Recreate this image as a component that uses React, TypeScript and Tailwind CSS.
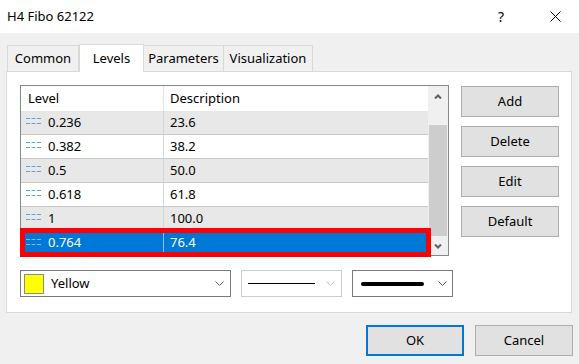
import type { ReactElement } from "react";

type Level = { value: string; description: string };

const levels: Level[] = [
  { value: "0.236", description: "23.6" },
  { value: "0.382", description: "38.2" },
  { value: "0.5", description: "50.0" },
  { value: "0.618", description: "61.8" },
  { value: "1", description: "100.0" },
  { value: "0.764", description: "76.4" },
];

function DashIcon({ selected }: { selected: boolean }): ReactElement {
  const fill = selected ? "#8fb8e6" : "#6a9fd4";
  return (
    <svg width="15" height="6" viewBox="0 0 15 6" className="-mt-[3px] shrink-0">
      {[0, 5.5, 11].map((x) => (
        <g key={x}>
          <rect x={x} y="0" width="4" height="1" fill={fill} />
          <rect x={x} y="5" width="4" height="1" fill={fill} />
        </g>
      ))}
    </svg>
  );
}

function Chevron({ color = "#606060" }: { color?: string }): ReactElement {
  return (
    <svg width="9" height="5" viewBox="0 0 9 5" className="shrink-0">
      <path d="M0.5 0.5 L4.5 4.5 L8.5 0.5" fill="none" stroke={color} strokeWidth="1" />
    </svg>
  );
}

function ScrollArrow({ up }: { up: boolean }): ReactElement {
  return (
    <svg width="8" height="5" viewBox="0 0 8 5">
      <path
        d={up ? "M1 4.5 L4 1.5 L7 4.5" : "M1 0.5 L4 3.5 L7 0.5"}
        fill="none"
        stroke="#606060"
        strokeWidth="2"
      />
    </svg>
  );
}

function SideButton({ label }: { label: string }): ReactElement {
  return (
    <button
      type="button"
      className="flex h-[31px] w-[98px] items-center justify-center border border-[#adadad] bg-[#e1e1e1]"
    >
      {label}
    </button>
  );
}

function Tab({ label, width, active = false }: { label: string; width: string; active?: boolean }): ReactElement {
  return active ? (
    <div
      className={`relative z-10 -mb-px flex h-[28px] items-start justify-center border border-b-0 border-[#d9d9d9] bg-white pt-[4px] ${width}`}
    >
      {label}
    </div>
  ) : (
    <div
      className={`-ml-px flex h-[26px] items-center justify-center border border-b-0 border-[#d9d9d9] bg-[#f0f0f0] first:ml-0 ${width}`}
    >
      {label}
    </div>
  );
}

export default function App(): ReactElement {
  return (
    <div className="flex h-[364px] w-[579px] flex-col overflow-hidden bg-[#f0f0f0] font-['Noto_Sans',sans-serif] text-[13px] text-black">
      {/* title bar */}
      <div className="flex h-[33px] shrink-0 items-center bg-white pl-[7px]">
        <span>H4 Fibo 62122</span>
        <div className="ml-auto flex items-center pr-[1px]">
          <span className="w-[46px] text-center text-[14px]">?</span>
          <span className="ml-[8px] flex w-[46px] justify-center">
            <svg width="11" height="11" viewBox="0 0 11 11">
              <path d="M0.5 0.5 L10.5 10.5 M10.5 0.5 L0.5 10.5" stroke="#000" strokeWidth="1" />
            </svg>
          </span>
        </div>
      </div>

      {/* tabs */}
      <div className="mt-[11px] flex h-[27px] items-end pl-[7px]">
        <Tab label="Common" width="w-[72px]" />
        <Tab label="Levels" width="w-[65px]" active />
        <Tab label="Parameters" width="w-[81px]" />
        <Tab label="Visualization" width="w-[90px]" />
      </div>

      {/* panel */}
      <div className="ml-[6px] flex h-[242px] w-[566px] flex-col border border-[#d9d9d9] bg-white pl-[13px] pt-[13px]">
        <div className="flex items-start">
          <div className="relative flex h-[171px] w-[429px] border border-[#828790] bg-white">
            <div className="flex flex-1 flex-col">
              <div className="flex h-[25px] shrink-0 items-center bg-white">
                <div className="w-[142px] pl-[7px]">Level</div>
                <div className="h-full w-px bg-[#e5e5e5]" />
                <div className="pl-[6px]">Description</div>
              </div>
              {levels.map((row, index) => {
                const selected = index === levels.length - 1;
                const bg = selected ? "bg-[#0078d7] text-white" : index % 2 === 0 ? "bg-[#e8e8e8]" : "bg-white";
                return (
                  <div
                    key={row.value}
                    className={`flex h-[24px] shrink-0 items-center ${bg} ${selected ? "" : "border-b border-[#c8c8c8]"}`}
                  >
                    <div className="flex w-[142px] items-center gap-[7px] pl-[5px]">
                      <DashIcon selected={selected} />
                      <span>{row.value}</span>
                    </div>
                    <div className={`h-full w-px ${selected ? "bg-[#8cc0ea]" : "bg-[#d5d5d5]"}`} />
                    <div className="pl-[6px]">{row.description}</div>
                  </div>
                );
              })}
            </div>

            {/* scrollbar */}
            <div className="flex w-[20px] flex-col items-center bg-[#f0f0f0]">
              <div className="flex h-[20px] w-full items-center justify-center">
                <ScrollArrow up />
              </div>
              <div className="mt-[19px] h-[111px] w-[18px] bg-[#cdcdcd]" />
              <div className="mt-auto flex h-[18px] w-full items-center justify-center">
                <ScrollArrow up={false} />
              </div>
            </div>

            {/* highlight frame */}
            <div className="pointer-events-none absolute left-[-1px] top-[142px] h-[29px] w-[411px] border-[5px] border-[#ff0000]" />
          </div>

          <div className="ml-[12px] mt-[1px] flex flex-col gap-[9px]">
            <SideButton label="Add" />
            <SideButton label="Delete" />
            <SideButton label="Edit" />
            <SideButton label="Default" />
          </div>
        </div>

        {/* style row */}
        <div className="mt-[14px] flex gap-[10px]">
          <div className="flex h-[27px] w-[211px] items-center border border-[#7a7a7a] bg-white pl-[3px] pr-[6px]">
            <div className="h-[20px] w-[20px] border border-[#8a8a8a] bg-[#ffff00]" />
            <span className="ml-[7px]">Yellow</span>
            <span className="ml-auto">
              <Chevron />
            </span>
          </div>
          <div className="flex h-[27px] w-[101px] items-center border border-[#cccccc] bg-white pl-[6px] pr-[6px]">
            <div className="h-px w-[67px] bg-black" />
            <span className="ml-auto">
              <Chevron color="#c0c0c0" />
            </span>
          </div>
          <div className="flex h-[27px] w-[101px] items-center border border-[#7a7a7a] bg-white pl-[8px] pr-[5px]">
            <div className="h-[4px] w-[63px] rounded-[2px] bg-black" />
            <span className="ml-auto">
              <Chevron />
            </span>
          </div>
        </div>
      </div>

      {/* dialog buttons */}
      <div className="mt-[12px] flex justify-end gap-[11px] pr-[6px]">
        <button
          type="button"
          className="flex h-[31px] w-[98px] items-center justify-center border-2 border-[#0078d7] bg-[#e1e1e1]"
        >
          OK
        </button>
        <button
          type="button"
          className="flex h-[31px] w-[98px] items-center justify-center border border-[#adadad] bg-[#e1e1e1]"
        >
          Cancel
        </button>
      </div>
    </div>
  );
}
